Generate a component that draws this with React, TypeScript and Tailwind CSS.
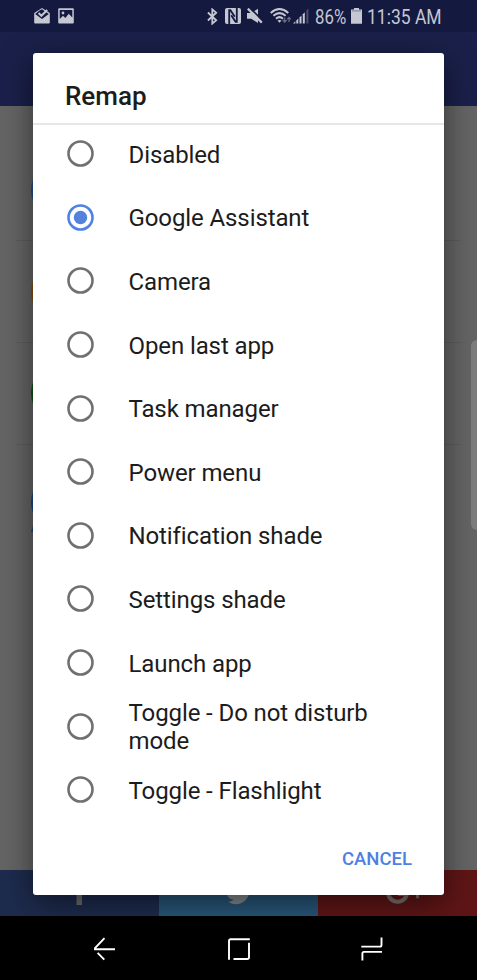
import React from "react";

const options = [
  "Disabled",
  "Google Assistant",
  "Camera",
  "Open last app",
  "Task manager",
  "Power menu",
  "Notification shade",
  "Settings shade",
  "Launch app",
  "Toggle - Do not disturb mode",
  "Toggle - Flashlight",
];

function StatusBar() {
  return (
    <div className="h-8 shrink-0 bg-[#14193f] flex items-center text-[#c5c7d3] text-[20px] leading-none">
      {/* Inbox */}
      <svg className="ml-[34px] w-4 h-4 shrink-0" viewBox="0 0 16 16">
        <path d="M8 0L15.8 5V14.6Q15.8 15.6 14.8 15.6H1.2Q.2 15.6.2 14.6V5Z" fill="currentColor" />
        <path d="M1.2 6L5.5 2.6L8 1.2L14.8 6L8 11Z" fill="#14193f" />
        <path d="M4.6 5L7.4 7.8L13.2 2" fill="none" stroke="currentColor" strokeWidth="2" />
      </svg>
      {/* Screenshot */}
      <svg className="ml-2 w-4 h-4 shrink-0" viewBox="0 0 16 16">
        <rect x=".2" y=".2" width="15.6" height="15.4" rx="1" fill="currentColor" />
        <path d="M1.7 2H14.3V9.6L10.7 5.8L7.4 10L5 7.8L1.7 11Z" fill="#14193f" />
        <circle cx="5" cy="5" r="1.4" fill="currentColor" />
      </svg>

      {/* Bluetooth */}
      <svg className="ml-[133px] w-[11px] h-[17px] shrink-0" viewBox="0 0 11 17">
        <path d="M.9 4.5L9.2 12.3L5.3 15.6V1.4L9.2 4.7L.9 12.5" fill="none" stroke="currentColor" strokeWidth="1.8" />
      </svg>
      {/* NFC */}
      <svg className="ml-[7px] w-4 h-4 shrink-0" viewBox="0 0 16 16">
        <rect x="0" y="0" width="16" height="16" rx="2" fill="currentColor" />
        <path d="M4.2 16V2.2H5.4L9.8 8.8" fill="none" stroke="#14193f" strokeWidth="1.8" />
        <path d="M11.8 0V13.8H10.6L6.2 7.2" fill="none" stroke="#14193f" strokeWidth="1.8" />
      </svg>
      {/* Muted */}
      <svg className="ml-[6px] w-4 h-4 shrink-0" viewBox="0 0 16 16">
        <path d="M0 5H4.2L11 .8V15L4.2 10.8H0Z" fill="currentColor" />
        <path d="M2.4-.6L16 13" stroke="#14193f" strokeWidth="1.6" />
        <path d="M.8.6L14.8 14.6" stroke="currentColor" strokeWidth="2.2" />
      </svg>
      {/* Wi-Fi */}
      <svg className="ml-[7px] w-[22px] h-4 shrink-0" viewBox="0 0 22 16">
        <g fill="none" stroke="currentColor" strokeWidth="2">
          <path d="M.7 4.9Q9.5-2.8 18.3 4.9" />
          <path d="M3.4 7.8Q9.5 2.4 15.6 7.8" />
          <path d="M6 10.7Q9.5 7.6 13 10.7" />
        </g>
        <path d="M7.5 12.6Q9.5 11.2 11.5 12.6L9.5 14.7Z" fill="currentColor" />
        <path d="M14.7 9.5V14M12.8 12.2L14.7 14.2L16.6 12.2M19 14V9.5M17.2 11.3L19 9.4L20.8 11.3" fill="none" stroke="#6d7089" strokeWidth="1.2" />
      </svg>
      {/* Signal */}
      <svg className="ml-px w-4 h-4 shrink-0" viewBox="0 0 16 16">
        <g fill="currentColor">
          <path d="M0 15.6L2.4 13.2V15.6Z" />
          <path d="M3.3 12.6L5.3 10.6V15.6H3.3Z" />
          <path d="M6.5 9.6L8.5 7.6V15.6H6.5Z" />
          <path d="M9.8 6.3L11.8 4.3V15.6H9.8Z" />
        </g>
        <path d="M13.4 2.4L15.4.4V15.6H13.4Z" fill="#4b4f70" />
      </svg>
      <div className="ml-[6px] w-[32px] shrink-0">
        <span className="block pt-px origin-left scale-x-[0.84] whitespace-nowrap">86%</span>
      </div>
      {/* Battery */}
      <svg className="ml-[4px] w-[11px] h-4 shrink-0" viewBox="0 0 11 16">
        <path d="M3 0H8V1.6H11V15.8H0V1.6H3Z" fill="currentColor" />
        <path d="M1 2.9H10" stroke="#7d809a" strokeWidth="1" />
      </svg>
      <div className="ml-[5px] w-[75px] shrink-0">
        <span className="block pt-px origin-left scale-x-[0.875] whitespace-nowrap">11:35 AM</span>
      </div>
    </div>
  );
}

function Background() {
  return (
    <div className="flex-1 min-h-0 flex flex-col">
      <div className="h-[74px] shrink-0 bg-[#1a2049]" />
      <div className="flex-1 bg-[#646464] px-4 pt-[33px]">
        <div className="h-[102px] border-b border-[#5b5b5b] pl-[15px] pt-[21px]">
          <div className="size-[60px] rounded-full bg-[#1b4f8b]" />
        </div>
        <div className="h-[102px] border-b border-[#5b5b5b] pl-[15px] pt-[21px]">
          <div className="size-[60px] rounded-full bg-[#8a4d00]" />
        </div>
        <div className="h-[102px] border-b border-[#5b5b5b] pl-[15px] pt-[20px]">
          <div className="size-[60px] rounded-full bg-[#07530b]" />
        </div>
        <div className="pl-[15px] pt-[27px]">
          <svg className="w-[60px] h-[60px]" viewBox="0 0 60 60">
            <circle cx="30" cy="30" r="30" fill="#154685" />
            <path d="M0 60L3 50H20V60Z" fill="#154685" />
          </svg>
        </div>
      </div>
      <div className="h-[46px] shrink-0 grid grid-cols-3">
        <div className="bg-[#1d2b4d] flex justify-center">
          <svg className="w-7 h-9" viewBox="0 0 28 36">
            <path d="M10.5 35V20H6V15H10.5V10Q10.5 4 17 4H20V9H17.5Q16 9 16 11V15H20L19 20H16V35Z" fill="#6c6c6c" />
          </svg>
        </div>
        <div className="bg-[#285578] flex justify-center">
          <svg className="w-9 h-9" viewBox="0 0 36 36">
            <path d="M33 11Q31 12 29.5 12Q31 11 32 8Q30 9.5 28 9.5C24 5 16 8 17.5 15Q10 15 4.5 8.5Q1.5 14 6 18L3.5 17Q3.5 23 9 25H6Q7.5 29 13 29.8Q11 31.5 7.500 31.8C15 37.5 28 34 30 17Q32 13 33 11Z" fill="#85898c" />
          </svg>
        </div>
        <div className="bg-[#5f1516] flex justify-center">
          <svg className="w-12 h-10" viewBox="0 0 48 40">
            <path d="M31 16A9.6 9.6 0 1 0 33 24H24" fill="none" stroke="#7d7070" strokeWidth="4" />
            <path d="M43.5 16V28.3M37.5 22H48" stroke="#7d7070" strokeWidth="2.8" />
          </svg>
        </div>
      </div>
    </div>
  );
}

function NavBar() {
  return (
    <div className="h-16 shrink-0 bg-black flex items-center justify-between pl-[93px] pr-[93px] pt-px">
      <svg className="w-6 h-6" viewBox="0 0 24 24" fill="none" stroke="white" strokeWidth="1.9">
        <path d="M11.5 1.2L2 11.2V12.2H22M4.6 15.8L11.3 22.6" />
      </svg>
      <svg className="w-6 h-6" viewBox="0 0 24 24" fill="none" stroke="white" strokeWidth="1.9">
        <path d="M2 22.8V4Q2 2.3 3.7 2.3H22.8M6.5 22H20.3Q22 22 22 20.3V5.8" />
      </svg>
      <svg className="w-6 h-6" viewBox="0 0 24 24" fill="none" stroke="white" strokeWidth="1.9">
        <path d="M21.5.5V8Q21.5 9.6 19.9 9.6H1.3M22 14.9H4Q2.4 14.9 2.4 16.5V23.6" />
      </svg>
    </div>
  );
}

function Radio({ checked }: { checked: boolean }) {
  return (
    <svg
      className={"w-[27px] h-[27px] shrink-0 " + (checked ? "text-[#4f82e6]" : "text-[#707070]")}
      viewBox="0 0 27 27"
    >
      <circle cx="13.5" cy="13.5" r="12" fill="none" stroke="currentColor" strokeWidth="2.6" />
      {checked && <circle cx="13.5" cy="13.5" r="6.7" fill="#5583dc" />}
    </svg>
  );
}

export default function App() {
  return (
    <div className="relative w-[477px] h-[980px] overflow-hidden flex flex-col font-['Roboto',sans-serif]">
      <StatusBar />
      <Background />
      <NavBar />

      {/* Edge panel handle */}
      <div className="absolute right-0 top-[340px] w-[6px] h-[190px] rounded-l-[6px] bg-[#7d7d7d]" />

      {/* Dialog, its shadow is clipped at the system bars */}
      <div className="absolute inset-x-0 top-8 bottom-16 overflow-hidden pl-[33px] pt-[21px]">
        <div className="w-[411px] h-[842px] rounded-[3px] bg-white flex flex-col text-[#1c1c1c] shadow-[0_8px_30px_rgba(0,0,0,0.5)]">
          <div className="h-[72px] shrink-0 border-b-2 border-[#e6e6e6] pl-8 pt-[28px]">
            <h1 className="text-[26px] leading-[30px] font-medium">Remap</h1>
          </div>
          <div className="flex flex-col -mt-[3px]">
            {options.map((label, i) => (
              <label key={label} className="h-[63.6px] flex items-center pl-[34px] pr-10">
                <Radio checked={i === 1} />
                <span className="ml-[34.5px] pt-[2px] text-[24px] leading-[28px] tracking-[-0.1px]">{label}</span>
              </label>
            ))}
          </div>
          <div className="flex justify-end pr-8 mt-[25px]">
            <button className="text-[18.5px] leading-6 font-medium text-[#4f7fe0]">CANCEL</button>
          </div>
        </div>
      </div>
    </div>
  );
}
